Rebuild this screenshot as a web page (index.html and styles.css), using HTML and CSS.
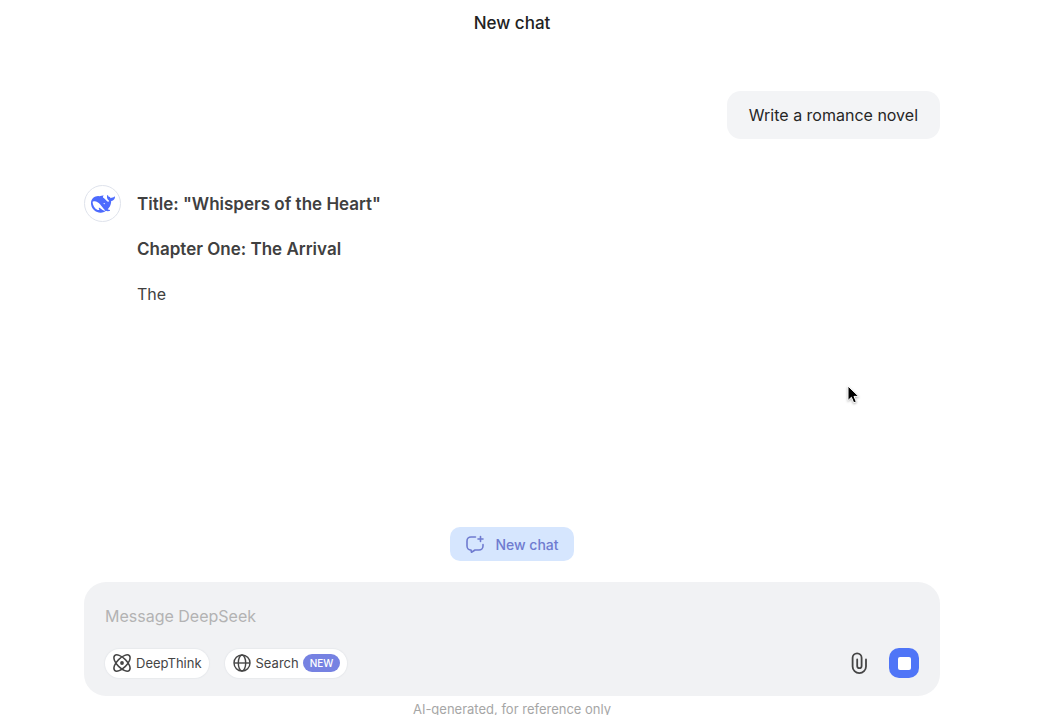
FILE: index.html
```html
<!DOCTYPE html>
<html lang="en">
<head>
    <meta charset="UTF-8">
    <meta name="viewport" content="width=device-width, initial-scale=1.0">
    <title>New chat</title>
    <link rel="stylesheet" href="styles.css">
</head>
<body>
    <header class="header">
        <h1 class="header-title">New chat</h1>
    </header>

    <main class="chat">
        <div class="message-user">Write a romance novel</div>
        <div class="message-bot">
            <div class="avatar">
                <svg width="24" height="24" viewBox="0 0 24 24" fill="#4d6bfe" aria-hidden="true">
                    <path fill-rule="evenodd" d="M23.748 4.482c-.254-.124-.364.113-.512.234-.051.039-.094.09-.137.136-.372.397-.806.657-1.373.626-.829-.046-1.537.214-2.163.848-.133-.782-.575-1.248-1.247-1.548-.352-.156-.708-.311-.955-.65-.172-.241-.219-.51-.305-.774-.055-.16-.11-.323-.293-.35-.2-.031-.278.136-.356.276-.313.572-.434 1.202-.422 1.84.027 1.436.633 2.58 1.838 3.393.137.093.172.187.129.323-.082.28-.18.552-.266.833-.055.179-.137.217-.329.14a5.526 5.526 0 01-1.736-1.18c-.857-.828-1.631-1.742-2.597-2.458a11.365 11.365 0 00-.689-.471c-.985-.957.13-1.743.388-1.836.27-.098.093-.432-.779-.428-.872.004-1.67.295-2.687.684a3.055 3.055 0 01-.465.137 9.597 9.597 0 00-2.883-.102c-1.885.21-3.39 1.102-4.497 2.623C.082 8.606-.231 10.684.152 12.85c.403 2.284 1.569 4.175 3.36 5.653 1.858 1.533 3.997 2.284 6.438 2.14 1.482-.085 3.133-.284 4.994-1.86.47.234.962.327 1.78.397.63.059 1.236-.03 1.705-.128.735-.156.684-.837.419-.961-2.155-1.004-1.682-.595-2.113-.926 1.096-1.296 2.746-2.642 3.392-7.003.05-.347.007-.565 0-.845-.004-.17.035-.237.23-.256a4.173 4.173 0 001.545-.475c1.396-.763 1.96-2.015 2.093-3.517.02-.23-.004-.467-.247-.588zM11.581 18c-2.089-1.642-3.102-2.183-3.52-2.16-.392.024-.321.471-.235.763.09.288.207.486.371.739.114.167.192.416-.113.603-.673.416-1.842-.14-1.897-.167-1.361-.802-2.5-1.86-3.301-3.307-.774-1.393-1.224-2.887-1.298-4.482-.02-.386.093-.522.477-.592a4.696 4.696 0 011.529-.039c2.132.312 3.946 1.265 5.468 2.774.868.86 1.525 1.887 2.202 2.891.72 1.066 1.494 2.082 2.48 2.914.348.292.625.514.891.677-.802.09-2.14.11-3.054-.614z"/>
                    <circle cx="13.2" cy="11.6" r="0.7" fill="#fff"/>
                </svg>
            </div>
            <div class="answer">
                <p><strong>Title: "Whispers of the Heart"</strong></p>
                <p><strong>Chapter One: The Arrival</strong></p>
                <p>The</p>
            </div>
        </div>
    </main>

    <footer class="footer">
        <button class="new-chat" type="button">
            <svg width="20" height="20" viewBox="0 0 20 20" fill="none" stroke="currentColor" stroke-width="1.6" stroke-linecap="round" stroke-linejoin="round" aria-hidden="true">
                <path d="M10.500 3H6a4 4 0 0 0-4 4v5a4 4 0 0 0 4 4l.5 2.200L10 16h4a4 4 0 0 0 4-4v-1.500"/>
                <path d="M15.500 2.500v5M13 5h5"/>
            </svg>
            New chat
        </button>

        <form class="composer">
            <input class="composer-input" type="text" placeholder="Message DeepSeek" aria-label="Message DeepSeek">
            <div class="composer-bar">
                <button class="chip" type="button">
                    <svg width="20" height="20" viewBox="0 0 20 20" fill="none" stroke="currentColor" stroke-width="1.5" aria-hidden="true">
                        <ellipse cx="10" cy="10" rx="10.4" ry="4.8" transform="rotate(45 10 10)"/>
                        <ellipse cx="10" cy="10" rx="10.4" ry="4.8" transform="rotate(-45 10 10)"/>
                        <circle cx="10" cy="10" r="1.9" fill="currentColor" stroke="none"/>
                    </svg>
                    DeepThink
                </button>
                <button class="chip" type="button">
                    <svg width="20" height="20" viewBox="0 0 20 20" fill="none" stroke="currentColor" stroke-width="1.4" aria-hidden="true">
                        <circle cx="10" cy="10" r="8"/>
                        <ellipse cx="10" cy="10" rx="3.7" ry="8"/>
                        <path d="M2 10h16"/>
                    </svg>
                    Search
                    <span class="badge">NEW</span>
                </button>
                <div class="composer-actions">
                    <button class="attach" type="button" aria-label="Attach file">
                        <svg width="18" height="24" viewBox="0 0 18 24" fill="none" stroke="currentColor" stroke-width="1.8" stroke-linecap="round" aria-hidden="true">
                            <path d="M16 8.500v7a6.700 6.700 0 0 1-13.400 0V6.800a4.500 4.500 0 0 1 9 0V15a2.200 2.200 0 0 1-4.400 0V8.500"/>
                        </svg>
                    </button>
                    <button class="stop" type="button" aria-label="Stop">
                        <span class="stop-icon"></span>
                    </button>
                </div>
            </div>
        </form>

        <p class="note">AI-generated, for reference only</p>
    </footer>

    <svg class="cursor" width="14" height="20" viewBox="0 0 14 20" aria-hidden="true">
        <path d="M1 1v14.500l3.400-3.200 2.300 5.500 2.600-1.100-2.300-5.300h4.700z" fill="#000" stroke="#fff" stroke-width="1"/>
    </svg>
</body>
</html>
```
FILE: styles.css
```css
* {
    margin: 0;
    box-sizing: border-box;
}

body {
    display: flex;
    flex-direction: column;
    height: 100vh;
    padding: 0 121px 0 84px;
    overflow: hidden;
    background-color: #fff;
    color: #404040;
    font-family: Inter, "Liberation Sans", sans-serif;
    font-size: 16px;
    line-height: 24px;
}

button,
input {
    border: none;
    font-family: inherit;
}

button {
    display: flex;
    align-items: center;
    justify-content: center;
    cursor: pointer;
}

svg {
    flex: none;
    display: block;
}

.header {
    padding: 11px 0 10px;
    text-align: center;
}

.header-title {
    color: #222;
    font-size: 17px;
    font-weight: 500;
}

.chat {
    display: flex;
    flex: 1;
    flex-direction: column;
    padding-top: 46px;
}

.message-user {
    align-self: flex-end;
    padding: 12px 22px;
    border-radius: 14px;
    background-color: #f3f4f6;
    color: #262626;
}

.message-bot {
    display: flex;
    gap: 16px;
    margin-top: 46px;
}

.avatar {
    display: flex;
    flex: none;
    align-items: center;
    justify-content: center;
    width: 37px;
    height: 37px;
    border: 1px solid #dfe3ec;
    border-radius: 50%;
}

.answer {
    display: flex;
    flex-direction: column;
    gap: 21px;
    padding-top: 7px;
}

.answer strong {
    font-size: 17px;
    font-weight: 600;
}

.footer {
    display: flex;
    flex-direction: column;
    align-items: center;
}

.new-chat {
    gap: 10px;
    height: 34px;
    padding: 0 15px;
    border-radius: 10px;
    background-color: #d6e6fe;
    color: #6f7bd0;
    font-size: 14px;
    font-weight: 500;
}

.composer {
    width: 100%;
    margin-top: 21px;
    padding: 21px 21px 18px;
    border-radius: 22px;
    background-color: #f1f2f4;
}

.composer-input {
    display: block;
    width: 100%;
    height: 26px;
    padding: 0;
    outline: none;
    background: none;
    font-size: 16px;
}

.composer-input::placeholder {
    color: #b3b3b3;
    opacity: 1;
}

.composer-bar {
    display: flex;
    align-items: center;
    gap: 16px;
    margin-top: 19px;
}

.chip {
    gap: 4px;
    height: 29px;
    padding: 0 7px;
    border-radius: 15px;
    background-color: #fff;
    box-shadow: 0 0 1px 1px #e8eaed;
    color: #454545;
    font-size: 13px;
}

.badge {
    padding: 0 7px;
    border-radius: 9px;
    background-color: #7682e2;
    color: #fff;
    font-size: 10px;
    font-weight: 500;
    line-height: 18px;
}

.composer-actions {
    display: flex;
    align-items: center;
    gap: 21px;
    margin-left: auto;
}

.attach {
    padding: 0;
    background: none;
    color: #454545;
}

.stop {
    width: 30px;
    height: 30px;
    padding: 0;
    border-radius: 10px;
    background-color: #4f75f7;
}

.stop-icon {
    width: 13px;
    height: 13px;
    border-radius: 2px;
    background-color: #fff;
}

.note {
    height: 19px;
    padding-top: 1px;
    color: #a6a6a6;
    font-size: 13px;
}

/* mouse pointer over the page */
.cursor {
    position: absolute;
    top: 385px;
    left: 847px;
    filter: drop-shadow(0 1px 1px rgba(0, 0, 0, 0.3));
}
```
